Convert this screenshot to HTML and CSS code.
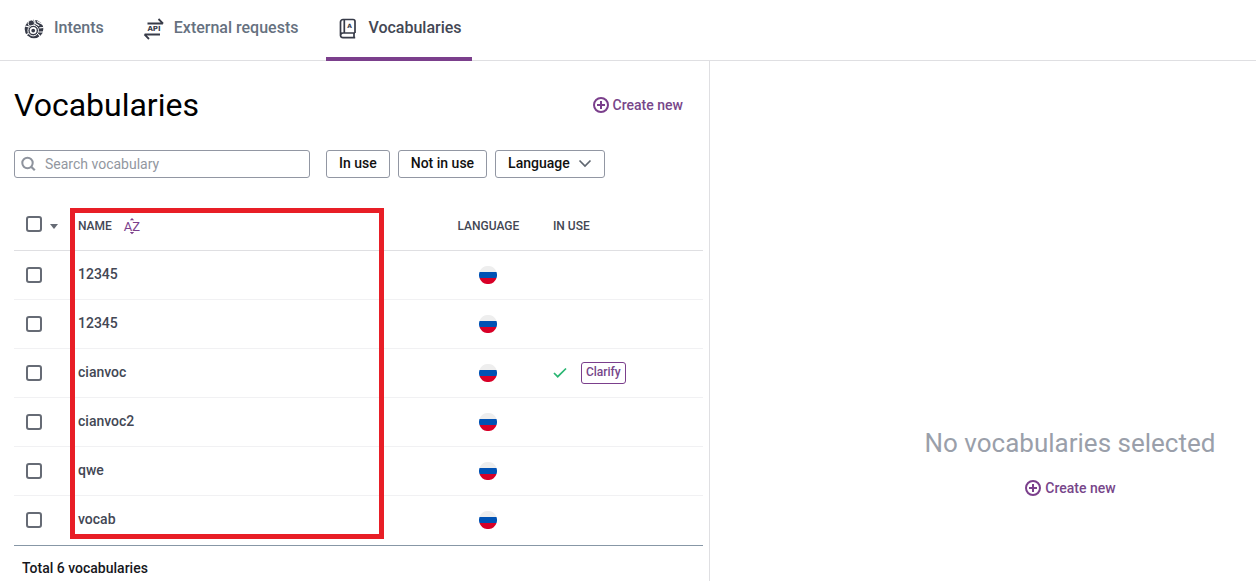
FILE: index.html
```html
<!DOCTYPE html>
<html lang="en">
  <head>
    <meta charset="UTF-8" />
    <meta name="viewport" content="width=device-width, initial-scale=1.0" />
    <title>Vocabularies</title>
    <link rel="stylesheet" href="styles.css">
  </head>
  <body>
    <!-- shared icons -->
    <svg class="sprite" aria-hidden="true">
      <symbol id="plus" viewBox="0 0 18 18">
        <circle cx="9" cy="9" r="7" fill="none" stroke="currentColor" stroke-width="2" />
        <path d="M9 5v8M5 9h8" fill="none" stroke="currentColor" stroke-width="2" />
      </symbol>
      <symbol id="flag-ru" viewBox="0 0 18 18">
        <path d="M.5 6a9 9 0 0 1 17 0z" fill="#eeeeee" />
        <path d="M.5 6h17a9 9 0 0 1 0 6H.5a9 9 0 0 1 0-6z" fill="#0052b4" />
        <path d="M.5 12h17a9 9 0 0 1-17 0z" fill="#d80027" />
      </symbol>
    </svg>

    <nav class="tabs">
      <a href="#intents" class="tab">
        <svg class="tab-icon" viewBox="0 0 24 24">
          <circle cx="12" cy="13" r="9.3" fill="#373b48" />
          <path d="M3 10l4 .8M4 19l2.800-1.800M12.400 3l.8 4.400 4 2.400M15 5.500l5 2.500M21.500 11.500l-4.200.4M21.500 16h-4.300M18.500 21l-2.200-3" fill="none" stroke="#fff" stroke-width="1.200" />
          <circle cx="9.300" cy="7.200" r="3.200" fill="#373b48" stroke="#fff" stroke-width=".9" />
          <circle cx="11.200" cy="14.600" r="5.300" fill="#373b48" stroke="#fff" stroke-width="1" />
          <circle cx="11.200" cy="14.600" r="2.700" fill="#373b48" stroke="#fff" stroke-width="1.600" />
        </svg>
        Intents
      </a>
      <a href="#external" class="tab">
        <svg class="tab-icon" viewBox="0 0 24 24">
          <path d="M5.500 7.500h15.400M16.500 3l4.600 4.600M18 18.500H2.600M7 23l-4.600-4.600" fill="none" stroke="#373b48" stroke-width="1.8" />
          <text x="12" y="15.400" text-anchor="middle" class="api-text">API</text>
        </svg>
        External requests
      </a>
      <a href="#vocabularies" class="tab active">
        <svg class="tab-icon" viewBox="0 0 24 24">
          <path d="M19 17V5.500a2 2 0 0 0-2-2H7a2.500 2.500 0 0 0-2.500 2.500v13.500A2.500 2.500 0 0 0 7 21.700h12.200M19 17H7a2.400 2.400 0 0 0-2.400 2.400M18 17.200v4.300M8.300 4v13" fill="none" stroke="#373b48" stroke-width="1.7" />
          <text x="13.700" y="11.500" text-anchor="middle" class="book-text">A</text>
        </svg>
        Vocabularies
      </a>
    </nav>

    <main class="content">
      <section class="list-panel">
        <div class="list-head">
          <h1>Vocabularies</h1>
          <a href="#new" class="create"><svg class="icon-plus"><use href="#plus" /></svg>Create new</a>
        </div>

        <div class="filters">
          <label class="search">
            <svg viewBox="0 0 16 16">
              <circle cx="6.500" cy="7" r="5.200" fill="none" stroke="currentColor" stroke-width="2" />
              <path d="M10.200 10.700l3.600 3.600" stroke="currentColor" stroke-width="2.200" />
            </svg>
            <input type="text" placeholder="Search vocabulary" aria-label="Search vocabulary" />
          </label>
          <button type="button" class="filter">In use</button>
          <button type="button" class="filter">Not in use</button>
          <button type="button" class="filter language">
            Language
            <svg viewBox="0 0 14 14"><path d="M1.500 4.500L7 10l5.500-5.500" fill="none" stroke="currentColor" stroke-width="1.700" /></svg>
          </button>
        </div>

        <div class="table-wrap">
          <table>
            <thead>
              <tr>
                <th class="col-check">
                  <div class="check-all">
                    <input type="checkbox" aria-label="Select all" />
                    <button type="button" class="caret" aria-label="Selection options"></button>
                  </div>
                </th>
                <th class="col-name">
                  <div class="sort">
                    NAME
                    <svg viewBox="0 0 18 18">
                      <path d="M6.800 3.200L9 1l2.200 2.200zM6.800 15L9 17.200 11.200 15z" fill="currentColor" />
                      <text x="9" y="13.500" text-anchor="middle" class="az-text">AZ</text>
                    </svg>
                  </div>
                </th>
                <th class="col-lang">LANGUAGE</th>
                <th class="col-use">IN USE</th>
              </tr>
            </thead>
            <tbody>
              <tr>
                <td><input type="checkbox" aria-label="Select 12345" /></td>
                <td>12345</td>
                <td class="col-lang"><svg class="flag"><use href="#flag-ru" /></svg></td>
                <td></td>
              </tr>
              <tr>
                <td><input type="checkbox" aria-label="Select 12345" /></td>
                <td>12345</td>
                <td class="col-lang"><svg class="flag"><use href="#flag-ru" /></svg></td>
                <td></td>
              </tr>
              <tr>
                <td><input type="checkbox" aria-label="Select cianvoc" /></td>
                <td>cianvoc</td>
                <td class="col-lang"><svg class="flag"><use href="#flag-ru" /></svg></td>
                <td>
                  <div class="used">
                    <svg viewBox="0 0 14 14"><path d="M1 7l3.700 3.700L13 2.500" fill="none" stroke="#2bb673" stroke-width="1.700" /></svg>
                    <a href="#clarify" class="tag">Clarify</a>
                  </div>
                </td>
              </tr>
              <tr>
                <td><input type="checkbox" aria-label="Select cianvoc2" /></td>
                <td>cianvoc2</td>
                <td class="col-lang"><svg class="flag"><use href="#flag-ru" /></svg></td>
                <td></td>
              </tr>
              <tr>
                <td><input type="checkbox" aria-label="Select qwe" /></td>
                <td>qwe</td>
                <td class="col-lang"><svg class="flag"><use href="#flag-ru" /></svg></td>
                <td></td>
              </tr>
              <tr>
                <td><input type="checkbox" aria-label="Select vocab" /></td>
                <td>vocab</td>
                <td class="col-lang"><svg class="flag"><use href="#flag-ru" /></svg></td>
                <td></td>
              </tr>
            </tbody>
          </table>
          <div class="highlight"></div>
        </div>
        <p class="total">Total 6 vocabularies</p>
      </section>

      <section class="empty-panel">
        <h2>No vocabularies selected</h2>
        <a href="#new" class="create"><svg class="icon-plus"><use href="#plus" /></svg>Create new</a>
      </section>
    </main>
  </body>
</html>
```
FILE: styles.css
```css
* {
  box-sizing: border-box;
}
body {
  margin: 0;
  min-height: 100vh;
  display: flex;
  flex-direction: column;
  font-family: Roboto, sans-serif;
  font-size: 14px;
  font-weight: 500;
  line-height: 20px;
  color: #434754;
  background-color: #fff;
}
a {
  text-decoration: none;
}
svg {
  display: block;
  flex-shrink: 0;
}
button,
input {
  font: inherit;
}
.sprite {
  position: absolute;
  width: 0;
  height: 0;
}

/* top tabs */
.tabs {
  display: flex;
  gap: 18px;
  padding-left: 12px;
  box-shadow: inset 0 -1px #dfdfe2;
}
.tab {
  display: flex;
  align-items: center;
  gap: 8px;
  height: 61px;
  padding: 0 10px 2px;
  border-bottom: 4px solid transparent;
  font-size: 16px;
  color: #66717f;
}
.tab.active {
  color: #434754;
  border-bottom-color: #7b3f8c;
}
.tab-icon {
  width: 24px;
  height: 24px;
}
.api-text {
  font: bold 7px "DejaVu Sans", sans-serif;
  fill: #373b48;
}
.book-text {
  font: bold 6px "DejaVu Sans", sans-serif;
  fill: #373b48;
}

/* panels */
.content {
  flex: 1;
  display: grid;
  grid-template-columns: 13fr 10fr;
}
.list-panel {
  padding: 24px 6px 0 14px;
  border-right: 1px solid #dfdfe2;
}
.list-head {
  display: flex;
  align-items: center;
  justify-content: space-between;
  padding-right: 20px;
}
h1 {
  margin: 0;
  font-size: 32px;
  font-weight: 400;
  line-height: 40px;
  color: #000;
}
.create {
  display: flex;
  align-items: center;
  gap: 3px;
  color: #77468a;
}
.icon-plus {
  width: 18px;
  height: 18px;
  color: #7b3f8c;
}

/* filters */
.filters {
  display: flex;
  gap: 8px;
  margin-top: 25px;
}
.search {
  flex: 0 0 296px;
  display: flex;
  align-items: center;
  gap: 8px;
  height: 28px;
  margin-right: 8px;
  padding: 0 6px;
  border: 1px solid #9297a3;
  border-radius: 3px;
  color: #8e939d;
}
.search svg {
  width: 16px;
  height: 16px;
}
.search input {
  flex: 1;
  min-width: 0;
  padding: 0;
  border: none;
  outline: none;
  background: none;
  font-weight: 400;
}
.search input::placeholder {
  color: #9297a0;
}
.filter {
  height: 28px;
  padding: 0 12px 2px;
  border: 1px solid #9297a3;
  border-radius: 3px;
  background-color: #fff;
  color: #111;
  cursor: pointer;
}
.language {
  display: flex;
  align-items: center;
  gap: 8px;
}
.language svg {
  width: 14px;
  height: 14px;
  color: #5f6670;
}

/* table */
.table-wrap {
  position: relative;
  margin-top: 23px;
}
table {
  width: 100%;
  table-layout: fixed;
  border-spacing: 0;
}
th,
td {
  height: 49px;
  padding: 0 8px 2px;
  border-bottom: 1px solid #f1f1f3;
  text-align: left;
}
th {
  height: 50px;
  padding-bottom: 0;
  border-bottom-color: #dfdfe2;
  font-size: 12px;
  font-weight: 500;
}
tbody {
  box-shadow: 0 1px #8797a6;
}
tbody tr:last-child td {
  border-bottom-color: transparent;
}
th:first-child,
td:first-child {
  padding: 0 0 0 12px;
}
.col-check {
  width: 56px;
}
.col-lang {
  width: 113px;
  text-align: center;
}
td.col-lang {
  padding-bottom: 0;
}
.col-use {
  width: 158px;
}
input[type="checkbox"] {
  display: block;
  appearance: none;
  width: 16px;
  height: 16px;
  margin: 0;
  border: 2px solid #666b75;
  border-radius: 3px;
  background-color: #fff;
}
input[type="checkbox"]:checked {
  background-color: #7b3f8c;
}
.check-all {
  display: flex;
  align-items: center;
  gap: 8px;
  padding-bottom: 3px;
}
.caret {
  width: 8px;
  height: 4px;
  margin-top: 5px;
  padding: 0;
  border: 4px solid transparent;
  border-top: 5px solid #666b75;
  border-bottom: none;
  background: none;
}
.sort {
  display: flex;
  align-items: center;
  gap: 11px;
}
.sort svg {
  width: 18px;
  height: 18px;
  color: #7b3f8c;
}
.az-text {
  font: 400 13px Roboto, sans-serif;
  fill: #7b3f8c;
}
.flag {
  width: 18px;
  height: 18px;
  margin: 0 auto;
}
.used {
  display: flex;
  align-items: center;
  gap: 14px;
  padding-top: 2px;
}
.used svg {
  width: 14px;
  height: 14px;
}
.tag {
  height: 22px;
  padding: 0 4px;
  border: 1px solid #7b3f8c;
  border-radius: 3px;
  font-size: 12px;
  line-height: 19px;
  color: #77468a;
}

/* red frame over the name column */
.highlight {
  position: absolute;
  top: 7px;
  bottom: 6px;
  left: 56px;
  width: 314px;
  border: 5px solid #e81e26;
  pointer-events: none;
}
.total {
  margin: 13px 8px 0;
  color: #16171c;
}

/* nothing selected */
.empty-panel {
  display: flex;
  flex-direction: column;
  align-items: center;
  gap: 19px;
  padding: 366px 0 0 174px;
}
h2 {
  margin: 0;
  font-size: 26px;
  font-weight: 400;
  line-height: 32px;
  color: #9a9faa;
}
```
